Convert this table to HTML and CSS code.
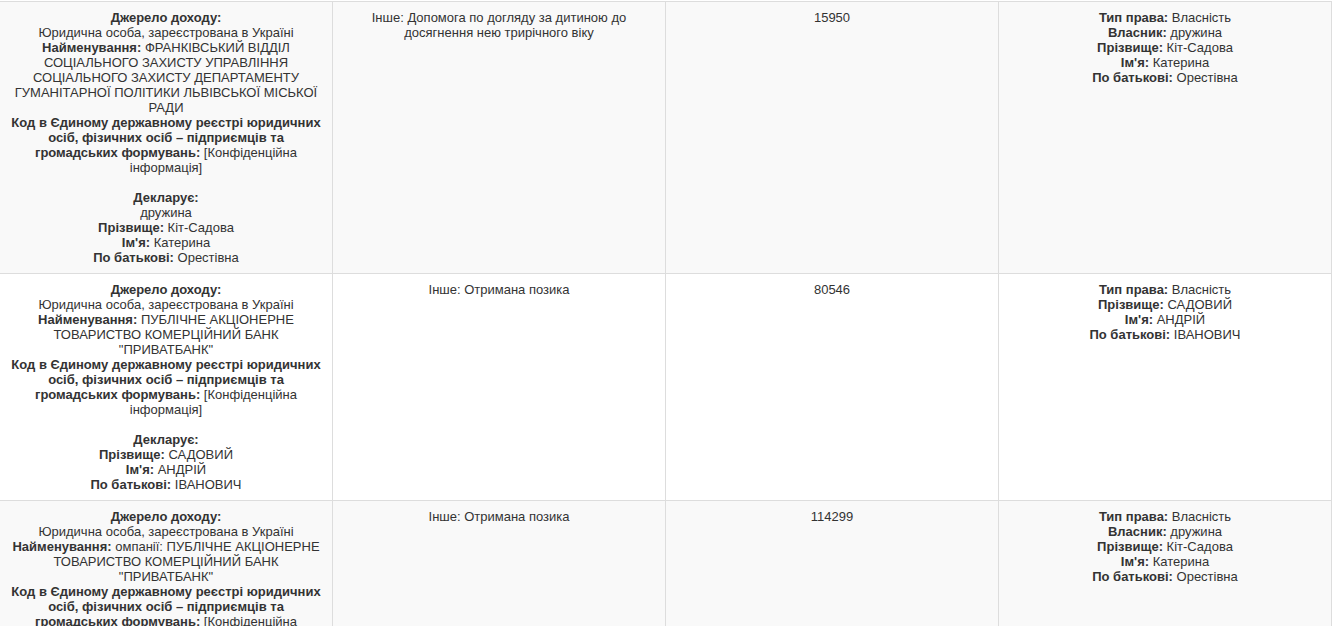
FILE: index.html
```html
<!DOCTYPE html>
<html lang="uk">
<head>
  <meta charset="UTF-8" />
  <meta name="viewport" content="width=device-width, initial-scale=1" />
  <title>Доходи</title>
  <link rel="stylesheet" href="styles.css">
</head>
<body>
  <table class="income-table">
    <colgroup>
      <col class="col" />
      <col class="col" />
      <col class="col" />
      <col class="col" />
    </colgroup>
    <tbody>
      <tr>
        <td>
          <b>Джерело доходу:</b><br>
          Юридична особа, зареєстрована в Україні<br>
          <b>Найменування:</b> ФРАНКІВСЬКИЙ ВІДДІЛ СОЦІАЛЬНОГО ЗАХИСТУ УПРАВЛІННЯ СОЦІАЛЬНОГО ЗАХИСТУ ДЕПАРТАМЕНТУ ГУМАНІТАРНОЇ ПОЛІТИКИ ЛЬВІВСЬКОЇ МІСЬКОЇ РАДИ<br>
          <b>Код в Єдиному державному реєстрі юридичних осіб, фізичних осіб – підприємців та громадських формувань:</b> [Конфіденційна інформація]<br>
          <br>
          <b>Декларує:</b><br>
          дружина<br>
          <b>Прізвище:</b> Кіт-Садова<br>
          <b>Ім'я:</b> Катерина<br>
          <b>По батькові:</b> Орестівна
        </td>
        <td>Інше: Допомога по догляду за дитиною до досягнення нею трирічного віку</td>
        <td>15950</td>
        <td>
          <b>Тип права:</b> Власність<br>
          <b>Власник:</b> дружина<br>
          <b>Прізвище:</b> Кіт-Садова<br>
          <b>Ім'я:</b> Катерина<br>
          <b>По батькові:</b> Орестівна
        </td>
      </tr>
      <tr>
        <td>
          <b>Джерело доходу:</b><br>
          Юридична особа, зареєстрована в Україні<br>
          <b>Найменування:</b> ПУБЛІЧНЕ АКЦІОНЕРНЕ ТОВАРИСТВО КОМЕРЦІЙНИЙ БАНК "ПРИВАТБАНК"<br>
          <b>Код в Єдиному державному реєстрі юридичних осіб, фізичних осіб – підприємців та громадських формувань:</b> [Конфіденційна інформація]<br>
          <br>
          <b>Декларує:</b><br>
          <b>Прізвище:</b> САДОВИЙ<br>
          <b>Ім'я:</b> АНДРІЙ<br>
          <b>По батькові:</b> ІВАНОВИЧ
        </td>
        <td>Інше: Отримана позика</td>
        <td>80546</td>
        <td>
          <b>Тип права:</b> Власність<br>
          <b>Прізвище:</b> САДОВИЙ<br>
          <b>Ім'я:</b> АНДРІЙ<br>
          <b>По батькові:</b> ІВАНОВИЧ
        </td>
      </tr>
      <tr>
        <td>
          <b>Джерело доходу:</b><br>
          Юридична особа, зареєстрована в Україні<br>
          <b>Найменування:</b> омпанії: ПУБЛІЧНЕ АКЦІОНЕРНЕ ТОВАРИСТВО КОМЕРЦІЙНИЙ БАНК "ПРИВАТБАНК"<br>
          <b>Код в Єдиному державному реєстрі юридичних осіб, фізичних осіб – підприємців та громадських формувань:</b> [Конфіденційна інформація]<br>
          <br>
          <b>Декларує:</b><br>
          дружина<br>
          <b>Прізвище:</b> Кіт-Садова<br>
          <b>Ім'я:</b> Катерина<br>
          <b>По батькові:</b> Орестівна
        </td>
        <td>Інше: Отримана позика</td>
        <td>114299</td>
        <td>
          <b>Тип права:</b> Власність<br>
          <b>Власник:</b> дружина<br>
          <b>Прізвище:</b> Кіт-Садова<br>
          <b>Ім'я:</b> Катерина<br>
          <b>По батькові:</b> Орестівна
        </td>
      </tr>
    </tbody>
  </table>
</body>
</html>
```

FILE: styles.css
```css
* {
  box-sizing: border-box;
}

body {
  margin: 0;
  padding-top: 1px;
  font-family: "Liberation Sans", Arial, sans-serif;
  font-size: 13px;
  line-height: 15px;
  color: #333;
  background-color: #fff;
  overflow: hidden;
}

.income-table {
  width: 1333px;
  margin-left: -1px;
  border-collapse: collapse;
  table-layout: fixed;
}

.income-table .col {
  width: 25%;
}

.income-table td {
  padding: 8px;
  border: 1px solid #ddd;
  text-align: center;
  vertical-align: top;
}

.income-table tr:nth-child(odd) td {
  background-color: #f9f9f9;
}

.income-table b {
  font-weight: bold;
}
```
